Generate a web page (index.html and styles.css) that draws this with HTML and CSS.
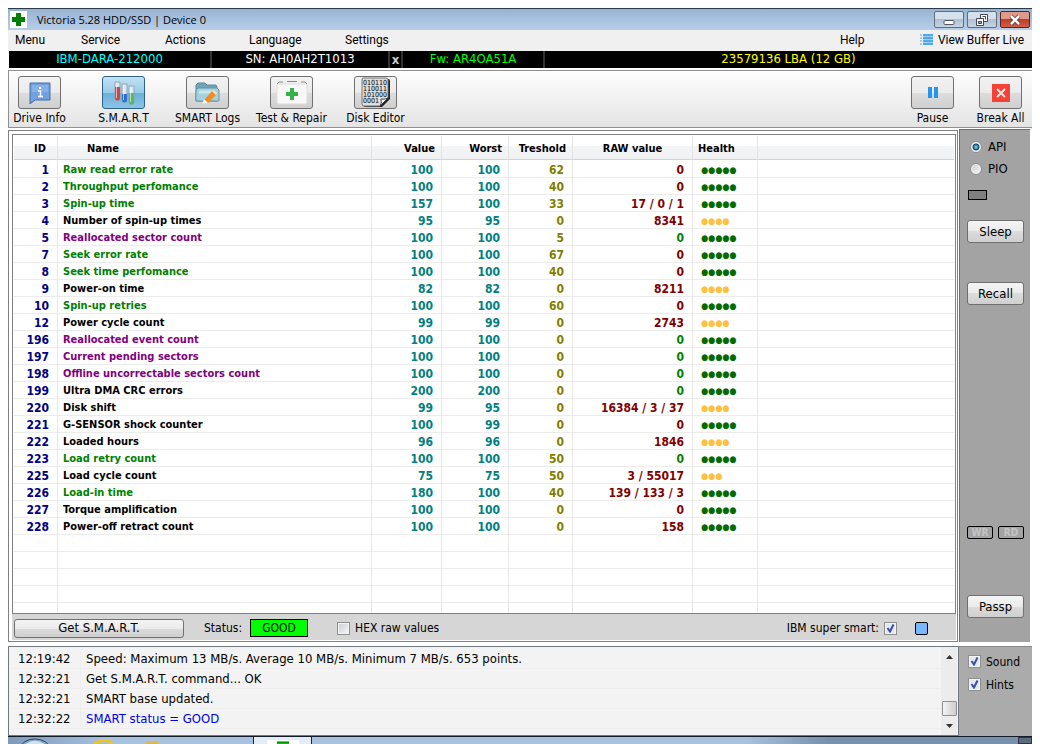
FILE: index.html
```html
<!DOCTYPE html>
<html lang="en">
<head>
  <meta charset="UTF-8">
  <meta name="viewport" content="width=device-width, initial-scale=1.0">
  <title>Victoria 5.28 HDD/SSD | Device 0</title>
  <link rel="stylesheet" href="styles.css">
</head>
<body>

  <header class="titlebar">
    <svg class="app-icon" width="17" height="17" viewBox="0 0 17 17"><rect width="17" height="17" fill="#fff"/><path d="M6 2h5v4h4v5h-4v4H6v-4H2V6h4z" fill="#008000"/></svg>
    <h1>Victoria 5.28 HDD/SSD | Device 0</h1>
    <div class="win-buttons">
      <button aria-label="Minimize"><svg width="12" height="12" viewBox="0 0 12 12"><rect x="1" y="6.500" width="10" height="4" rx="1" fill="#fff" stroke="#556"/></svg></button>
      <button aria-label="Restore"><svg width="12" height="12" viewBox="0 0 12 12"><path d="M4.500.500h7v7h-7z" fill="#fff" stroke="#445"/><path d="M6.500 2.500h3v3" fill="none" stroke="#445"/><path d="M.500 4.500h7v7h-7z" fill="#fff" stroke="#445"/><path d="M2.500 7.500h3v2h-3z" fill="#9ab" stroke="#445"/></svg></button>
      <button class="close" aria-label="Close"><svg width="12" height="12" viewBox="0 0 12 12"><path d="M2 2l8 8M10 2l-8 8" stroke="#533" stroke-width="4"/><path d="M2 2l8 8M10 2l-8 8" stroke="#fff" stroke-width="2.500"/></svg></button>
    </div>
  </header>

  <nav class="menu">
    <button>Menu</button>
    <button>Service</button>
    <button>Actions</button>
    <button>Language</button>
    <button>Settings</button>
    <button>Help</button>
    <button class="buffer">
      <svg width="14" height="12" viewBox="0 0 14 12"><path d="M3 1h10M3 4h10M3 7h10M3 10h10" stroke="#1e90e8" stroke-width="1.600"/><path d="M3 2.500h10M3 5.500h10M3 8.500h10" stroke="#9dd0f8"/><path d="M0 1h2M0 4h2M0 7h2M0 10h2" stroke="#58a8e8"/></svg>
      View Buffer Live
    </button>
  </nav>

  <div class="drive">
    <span class="model">IBM-DARA-212000</span>
    <span class="serial">SN: AH0AH2T1013</span>
    <button class="hide-sn">x</button>
    <span class="firmware">Fw: AR4OA51A</span>
    <span class="capacity">23579136 LBA (12 GB)</span>
  </div>

  <div class="toolbar">
    <div class="tool">
      <button id="t-info" aria-labelledby="l-info"><svg width="22" height="24" viewBox="0 0 22 24"><path d="M1 2h20v17H6l-5 4z" fill="#6fa0e0" stroke="#4a6f9f"/><path d="M3 4h16v7H3z" fill="#86b0e8"/><path d="M9 10h2.500v5M9 15.500h5" stroke="#fff" stroke-width="1.500" fill="none"/><rect x="10" y="6" width="2" height="2" fill="#fff"/></svg></button>
      <label id="l-info" for="t-info">Drive Info</label>
    </div>
    <div class="tool active">
      <button id="t-smart" aria-labelledby="l-smart"><svg width="22" height="28" viewBox="0 0 22 28"><g fill="#dbe8f2" stroke="#8fa6ba"><path d="M2 3v16a2.500 2.500 0 0 0 5 0V3z"/><path d="M9 5v16a2.500 2.500 0 0 0 5 0V5z"/><path d="M16 7v16a2.500 2.500 0 0 0 5 0V7z"/></g><path d="M2 8h5v11a2.500 2.500 0 0 1-5 0z" fill="#d8443c"/><path d="M9 15h5v6a2.500 2.500 0 0 1-5 0z" fill="#2b6fd0"/><path d="M16 14h5v9a2.500 2.500 0 0 1-5 0z" fill="#4cc05a"/><path d="M3.500 4v15M10.500 6v15M17.500 8v15" stroke="#fff" stroke-opacity=".6"/></svg></button>
      <label id="l-smart" for="t-smart">S.M.A.R.T</label>
    </div>
    <div class="tool">
      <button id="t-logs" aria-labelledby="l-logs"><svg width="25" height="24" viewBox="0 0 25 24"><path d="M1 20V4l2-2h7l2 2h9l1 2v14z" fill="#6fa3b8" stroke="#5b8ca1"/><path d="M3 7h19l2 2v11H1V9z" fill="#a5d0df" stroke="#6797ab"/><path d="M4 11h14" stroke="#c9e6ef" stroke-width="3"/><path d="M9 19l8-9 4 4-8 8z" fill="#f28c1c"/><path d="M9 18l4 4-6 1z" fill="#fff" stroke="#ccc" stroke-width=".5"/><path d="M17 10l2-1 3 3-1 2z" fill="#fbe0bd"/></svg></button>
      <label id="l-logs" for="t-logs">SMART Logs</label>
    </div>
    <div class="tool">
      <button id="t-test" aria-labelledby="l-test"><svg width="34" height="26" viewBox="0 0 34 26"><path d="M2 4l2-2h4M12 1.500h10M26 2h4l2 2" fill="none" stroke="#888"/><rect x="2" y="4" width="30" height="20" rx="2" fill="#f8f8f8" stroke="#ddd"/><path d="M15 8h4v4h4v4h-4v4h-4v-4h-4v-4h4z" fill="#35b34a"/></svg></button>
      <label id="l-test" for="t-test">Test &amp; Repair</label>
    </div>
    <div class="tool">
      <button id="t-disk" aria-labelledby="l-disk"><svg width="29" height="31" viewBox="0 0 29 31"><path d="M3 2h24q2 0 2 2v18l-8 8H5q-3 0-3-3z" fill="#222"/><path d="M2 1h23q2 0 2 2v18l-8 8H3q-2 0-2-2V3q0-2 1-2z" fill="#dedede" stroke="#777"/><g class="bits"><text x="2" y="8">010110</text><text x="2" y="14">110011</text><text x="2" y="20">101000</text><text x="2" y="26">0001</text></g><path d="M19 29q2-2 1-7 3 1 7-1z" fill="#fff" stroke="#444"/></svg></button>
      <label id="l-disk" for="t-disk">Disk Editor</label>
    </div>
    <div class="tool-end">
      <div class="tool">
        <button id="t-pause" aria-labelledby="l-pause"><svg width="10" height="11" viewBox="0 0 10 11"><path d="M0 0h4v11H0zM6 0h4v11H6z" fill="#2196f3"/></svg></button>
        <label id="l-pause" for="t-pause">Pause</label>
      </div>
      <div class="tool">
        <button id="t-break" aria-labelledby="l-break"><svg width="18" height="18" viewBox="0 0 18 18"><path d="M0 0h18v18H0z" fill="#f44336"/><path d="M5 5l8 8M13 5l-8 8" stroke="#fde8e6" stroke-width="2"/></svg></button>
        <label id="l-break" for="t-break">Break All</label>
      </div>
    </div>
  </div>

  <main class="main">
    <section class="panel">
      <div class="grid">
        <table>
          <colgroup><col class="c-id"><col class="c-name"><col class="c-value"><col class="c-worst"><col class="c-tresh"><col class="c-raw"><col class="c-health"><col></colgroup>
          <thead>
            <tr><th>ID</th><th>Name</th><th>Value</th><th>Worst</th><th>Treshold</th><th>RAW value</th><th>Health</th><th></th></tr>
          </thead>
          <tbody>
            <tr class="perf"><td>1</td><td>Raw read error rate</td><td>100</td><td>100</td><td>62</td><td>0</td><td>●●●●●</td><td></td></tr>
            <tr class="perf"><td>2</td><td>Throughput perfomance</td><td>100</td><td>100</td><td>40</td><td>0</td><td>●●●●●</td><td></td></tr>
            <tr class="perf"><td>3</td><td>Spin-up time</td><td>157</td><td>100</td><td>33</td><td>17 / 0 / 1</td><td>●●●●●</td><td></td></tr>
            <tr class="warn"><td>4</td><td>Number of spin-up times</td><td>95</td><td>95</td><td>0</td><td>8341</td><td>●●●●</td><td></td></tr>
            <tr class="crit ok"><td>5</td><td>Reallocated sector count</td><td>100</td><td>100</td><td>5</td><td>0</td><td>●●●●●</td><td></td></tr>
            <tr class="perf"><td>7</td><td>Seek error rate</td><td>100</td><td>100</td><td>67</td><td>0</td><td>●●●●●</td><td></td></tr>
            <tr class="perf"><td>8</td><td>Seek time perfomance</td><td>100</td><td>100</td><td>40</td><td>0</td><td>●●●●●</td><td></td></tr>
            <tr class="warn"><td>9</td><td>Power-on time</td><td>82</td><td>82</td><td>0</td><td>8211</td><td>●●●●</td><td></td></tr>
            <tr class="perf"><td>10</td><td>Spin-up retries</td><td>100</td><td>100</td><td>60</td><td>0</td><td>●●●●●</td><td></td></tr>
            <tr class="warn"><td>12</td><td>Power cycle count</td><td>99</td><td>99</td><td>0</td><td>2743</td><td>●●●●</td><td></td></tr>
            <tr class="crit ok"><td>196</td><td>Reallocated event count</td><td>100</td><td>100</td><td>0</td><td>0</td><td>●●●●●</td><td></td></tr>
            <tr class="crit ok"><td>197</td><td>Current pending sectors</td><td>100</td><td>100</td><td>0</td><td>0</td><td>●●●●●</td><td></td></tr>
            <tr class="crit ok"><td>198</td><td>Offline uncorrectable sectors count</td><td>100</td><td>100</td><td>0</td><td>0</td><td>●●●●●</td><td></td></tr>
            <tr class="ok"><td>199</td><td>Ultra DMA CRC errors</td><td>200</td><td>200</td><td>0</td><td>0</td><td>●●●●●</td><td></td></tr>
            <tr class="warn"><td>220</td><td>Disk shift</td><td>99</td><td>95</td><td>0</td><td>16384 / 3 / 37</td><td>●●●●</td><td></td></tr>
            <tr><td>221</td><td>G-SENSOR shock counter</td><td>100</td><td>99</td><td>0</td><td>0</td><td>●●●●●</td><td></td></tr>
            <tr class="warn"><td>222</td><td>Loaded hours</td><td>96</td><td>96</td><td>0</td><td>1846</td><td>●●●●</td><td></td></tr>
            <tr class="perf ok"><td>223</td><td>Load retry count</td><td>100</td><td>100</td><td>50</td><td>0</td><td>●●●●●</td><td></td></tr>
            <tr class="warn"><td>225</td><td>Load cycle count</td><td>75</td><td>75</td><td>50</td><td>3 / 55017</td><td>●●●</td><td></td></tr>
            <tr class="perf"><td>226</td><td>Load-in time</td><td>180</td><td>100</td><td>40</td><td>139 / 133 / 3</td><td>●●●●●</td><td></td></tr>
            <tr><td>227</td><td>Torque amplification</td><td>100</td><td>100</td><td>0</td><td>0</td><td>●●●●●</td><td></td></tr>
            <tr><td>228</td><td>Power-off retract count</td><td>100</td><td>100</td><td>0</td><td>158</td><td>●●●●●</td><td></td></tr>
            <tr><td></td><td></td><td></td><td></td><td></td><td></td><td></td><td></td></tr>
            <tr><td></td><td></td><td></td><td></td><td></td><td></td><td></td><td></td></tr>
            <tr><td></td><td></td><td></td><td></td><td></td><td></td><td></td><td></td></tr>
            <tr><td></td><td></td><td></td><td></td><td></td><td></td><td></td><td></td></tr>
            <tr><td></td><td></td><td></td><td></td><td></td><td></td><td></td><td></td></tr>
          </tbody>
        </table>
      </div>
      <div class="statusbar">
        <button class="btn get">Get S.M.A.R.T.</button>
        <span>Status:</span>
        <span class="good">GOOD</span>
        <label class="hex"><input type="checkbox"> HEX raw values</label>
        <label class="super">IBM super smart: <input type="checkbox" checked></label>
        <span class="led"></span>
      </div>
    </section>

    <aside class="side">
      <label><input type="radio" name="mode" checked> API</label>
      <label><input type="radio" name="mode"> PIO</label>
      <span class="lamp"></span>
      <button class="btn sleep">Sleep</button>
      <button class="btn recall">Recall</button>
      <div class="rw"><span>WR</span><span>RD</span></div>
      <button class="btn passp">Passp</button>
    </aside>
  </main>

  <footer class="bottom">
    <div class="log">
      <ul>
        <li><time>12:19:42</time><span>Speed: Maximum 13 MB/s. Average 10 MB/s. Minimum 7 MB/s. 653 points.</span></li>
        <li><time>12:32:21</time><span>Get S.M.A.R.T. command... OK</span></li>
        <li><time>12:32:21</time><span>SMART base updated.</span></li>
        <li><time>12:32:22</time><span class="blue">SMART status = GOOD</span></li>
      </ul>
      <div class="scroll">
        <svg width="7" height="4" viewBox="0 0 7 4"><path d="M0 4l3.500-4L7 4z" fill="#333"/></svg>
        <span class="thumb"></span>
        <svg width="7" height="4" viewBox="0 0 7 4"><path d="M0 0l3.500 4L7 0z" fill="#333"/></svg>
      </div>
    </div>
    <div class="options">
      <label><input type="checkbox" checked> Sound</label>
      <label><input type="checkbox" checked> Hints</label>
    </div>
  </footer>

  <div class="taskbar">
    <svg width="230" height="7" viewBox="0 0 230 7"><ellipse cx="27" cy="12" rx="15" ry="10" fill="#7fa3c4" stroke="#2e4a66"/><path d="M16 8q11-9 22 0z" fill="#cfe0ee"/><path d="M86 7q7-5 15-3l3 3" fill="none" stroke="#f0c428" stroke-width="3"/><path d="M137 5h14v2h-14z" fill="#d8b850"/></svg>
    <span class="task"><svg width="32" height="6" viewBox="0 0 32 6"><path d="M0 2h32v4H0z" fill="#fff"/><path d="M10 4h12v2H10z" fill="#00c400"/><path d="M10 4h12" stroke="#060"/></svg></span>
    <span class="desktop"></span>
  </div>

</body>
</html>
```
FILE: styles.css
```css
* {
  box-sizing: border-box;
}
body {
  margin: 0;
  padding: 8px 8px 0;
  height: 100vh;
  min-height: 640px;
  display: flex;
  flex-direction: column;
  overflow: hidden;
  background: #fff;
  color: #000;
  font-family: "DejaVu Sans Condensed", "Noto Sans", sans-serif;
  font-size: 12px;
  line-height: 16px;
}
button, input {
  font: inherit;
  color: inherit;
  margin: 0;
  padding: 0;
}
svg {
  display: block;
}

/* title bar */
.titlebar {
  display: flex;
  align-items: center;
  height: 22px;
  padding: 0 2px;
  border-top: 1px solid #2c3b4a;
  background: linear-gradient(#98b4d2, #b6cee8);
}
.titlebar h1 {
  margin: 0 0 0 10px;
  font: 11px/16px "Open Sans", sans-serif;
}
.win-buttons {
  display: flex;
  gap: 3px;
  margin-left: auto;
}
.win-buttons button {
  display: flex;
  align-items: center;
  justify-content: center;
  width: 30px;
  height: 17px;
  border: 1px solid #5d6d7e;
  border-radius: 2px;
  background: linear-gradient(#d4e0ec 50%, #b0c0d2 50%, #c4d4e4);
}
.win-buttons .close {
  background: linear-gradient(#e09a8c 50%, #c03c28 50%, #d06048);
  border-color: #5a2420;
}

/* menu */
.menu {
  display: grid;
  grid-template-columns: 66px 84px 84px 96px 1fr 80px auto;
  align-items: center;
  height: 21px;
  padding: 0 8px 2px 7px;
  background: #f0f0f0;
  font: 12px/16px Roboto, sans-serif;
}
.menu button {
  border: 0;
  background: none;
  text-align: left;
}
.menu .buffer {
  display: flex;
  align-items: center;
  gap: 4px;
}

/* drive info line */
.drive {
  display: flex;
  height: 17px;
  margin-left: 1px;
  background: #000;
  font-size: 13px;
  text-align: center;
}
.drive > * {
  border: 0;
  border-right: 2px solid #333;
  background: none;
}
.model {
  width: 203px;
  color: #00ffff;
}
.serial {
  width: 178px;
  color: #fff;
}
.drive .hide-sn {
  width: 13px;
  color: #ccc;
  font-weight: bold;
  line-height: 14px;
}
.firmware {
  width: 142px;
  color: #00ff00;
}
.drive .capacity {
  flex: 1;
  border-right: 0;
  color: #ffff00;
}

/* toolbar */
.toolbar {
  display: flex;
  gap: 23px;
  margin-top: 2px;
  padding: 5px 0 1px;
  border: solid #909090;
  border-width: 1px 0 1px 1px;
  background: linear-gradient(#fefefe, #e4e4e4);
}
.tool {
  display: flex;
  flex-direction: column;
  align-items: center;
  gap: 1px;
  width: 61px;
  white-space: nowrap;
}
.tool button {
  display: flex;
  align-items: center;
  justify-content: center;
  width: 43px;
  height: 33px;
  border: 1px solid #707070;
  border-radius: 3px;
  background: linear-gradient(#f2f2f2, #ebebeb 50%, #dddddd 50%, #cfcfcf);
}
.tool.active button {
  border-color: #2c628b;
  background: linear-gradient(#c4e2f4, #98cbe8 50%, #68afd8 50%, #8cc4e4);
}
.tool-end {
  display: flex;
  gap: 7px;
  margin-left: auto;
  padding-right: 1px;
}
.bits {
  font: 7px "DejaVu Sans Condensed", sans-serif;
  fill: #000;
}

/* main */
.main {
  display: flex;
  flex: 1;
  min-height: 0;
  margin-top: 1px;
}
.panel {
  display: flex;
  flex: 1;
  flex-direction: column;
  min-width: 0;
  margin-top: 1px;
  padding: 3px 1px 1px 3px;
  border: 1px solid #808080;
}
.grid {
  flex: 1;
  min-height: 0;
  overflow: hidden;
  padding: 1px;
  border: 1px solid #808080;
}
table {
  width: 100%;
  table-layout: fixed;
  border-collapse: separate;
  border-spacing: 0;
  font-weight: bold;
}
.c-id {
  width: 44px;
}
.c-name {
  width: 314px;
}
.c-value {
  width: 70px;
}
.c-worst {
  width: 67px;
}
.c-tresh {
  width: 64px;
}
.c-raw {
  width: 120px;
}
.c-health {
  width: 65px;
}
th, td {
  padding: 2px 8px 0 5px;
  border-right: 1px solid #e8e8e8;
  border-bottom: 1px solid #ececec;
  line-height: 14px;
  text-align: right;
  white-space: nowrap;
}
th:last-child, td:last-child {
  border-right: 0;
}
th {
  height: 24px;
  padding: 3px 6px 0;
  border-color: #d0d4d8;
  border-right-color: #e2e4e6;
  background: linear-gradient(#fff 45%, #f4f5f7 45%, #f0f1f3);
  font-size: 11px;
}
th:nth-child(1) {
  padding-right: 11px;
}
th:nth-child(2) {
  padding-left: 29px;
  text-align: left;
}
th:nth-child(6) {
  text-align: center;
}
th:nth-child(7) {
  padding-left: 5px;
  text-align: left;
}
td {
  height: 17px;
}
tr:first-child td {
  padding-top: 3px;
}
td:nth-child(1) {
  color: #000080;
}
td:nth-child(2) {
  font-size: 11px;
}
td:nth-child(2), td:nth-child(7) {
  text-align: left;
}
td:nth-child(3), td:nth-child(4) {
  color: #008080;
}
td:nth-child(5) {
  color: #808000;
}
td:nth-child(6) {
  color: #800000;
}
td:nth-child(7) {
  padding-left: 8px;
  color: #006c00;
  font-size: 9px;
}
.perf td:nth-child(2), .ok td:nth-child(6) {
  color: #008000;
}
.crit td:nth-child(2) {
  color: #800080;
}
.warn td:nth-child(7) {
  color: #ffc040;
}
.statusbar {
  display: flex;
  align-items: center;
  height: 26px;
  padding: 2px 28px 0 2px;
  background: #d6d6d6;
}
.btn {
  height: 23px;
  border: 1px solid #707070;
  border-radius: 3px;
  background: linear-gradient(#f4f4f4, #ebebeb 50%, #dcdcdc 50%, #cfcfcf);
  font-size: 13px;
}
.get {
  width: 170px;
  height: 19px;
  margin-right: 20px;
  line-height: 16px;
}
.good {
  width: 58px;
  margin-left: 8px;
  border: 1px solid #000;
  background: #00ff00;
  text-align: center;
}
label {
  display: flex;
  align-items: center;
}
.hex {
  margin-left: 29px;
  gap: 5px;
}
.super {
  margin-left: auto;
  gap: 5px;
}
.led {
  width: 13px;
  height: 13px;
  margin-left: 18px;
  border: 1px solid #000;
  border-radius: 2px;
  background: #78b8ff;
}

/* check boxes and radios */
input {
  appearance: none;
  width: 13px;
  height: 13px;
  border: 1px solid #8e8f8f;
  background: linear-gradient(135deg, #cbcfd5, #f6f6f6);
  box-shadow: inset 0 0 0 1px #f4f4f4;
}
input[type="checkbox"]:checked {
  background: url("data:image/svg+xml,%3Csvg xmlns='http://www.w3.org/2000/svg' viewBox='0 0 11 11'%3E%3Cpath d='M2.500 5l2.500 3.500L8.500 1.500' fill='none' stroke='%233c50a0' stroke-width='2'/%3E%3C/svg%3E") #e4e8f0;
}
input[type="radio"] {
  width: 12px;
  height: 12px;
  border-radius: 50%;
}
input[type="radio"]:checked {
  background: radial-gradient(circle, #58c0e8 1px, #143c64 3px, #f4f4f4 4px);
}

/* right side */
.side {
  display: flex;
  flex-direction: column;
  width: 71px;
  margin: 0 2px 0 1px;
  padding: 6px 6px 24px 7px;
  border: solid #707070;
  border-width: 1px 0 0 1px;
  background: #a3a3a3;
}
.side label {
  gap: 6px;
  height: 22px;
  padding-left: 3px;
  font-size: 13px;
}
.lamp {
  width: 19px;
  height: 10px;
  margin: 10px 0 20px 1px;
  border: 1px solid #000;
  background: #808080;
}
.recall {
  margin-top: 39px;
}
.rw {
  display: flex;
  gap: 5px;
  margin: auto 0 56px;
}
.rw span {
  width: 27px;
  height: 13px;
  border: 1px solid #000;
  border-radius: 2px;
  color: #c4c4c4;
  font-size: 10px;
  font-weight: bold;
  line-height: 11px;
  text-align: center;
}

/* log */
.bottom {
  display: flex;
  margin-top: 4px;
}
.log {
  display: flex;
  flex: 1;
  height: 90px;
  border: 1px solid #707880;
  background: #f3f3f3;
}
.log ul {
  flex: 1;
  margin: 0;
  padding: 2px 0 0 3px;
  list-style: none;
}
.log li {
  display: flex;
  height: 20px;
  border-bottom: 1px solid #eee;
  font-size: 13px;
  line-height: 20px;
}
.log time {
  width: 69px;
  padding-left: 6px;
  border-right: 1px solid #eee;
}
.log li span {
  padding-left: 5px;
}
.log .blue {
  color: #0000e0;
}
.scroll {
  display: flex;
  flex-direction: column;
  align-items: center;
  width: 16px;
  margin-right: 1px;
  padding: 8px 0 7px;
  background: #ececec;
}
.thumb {
  width: 15px;
  height: 15px;
  margin: auto 0 8px;
  border: 1px solid #909090;
  border-radius: 1px;
  background: linear-gradient(90deg, #f4f4f4, #ccc);
}
.options {
  width: 73px;
  padding: 3px 0 0 9px;
  border-top: 1px solid #888;
  background: #ababab;
}
.options label {
  gap: 5px;
  height: 23px;
}

/* taskbar */
.taskbar {
  display: flex;
  height: 8px;
  flex: none;
  border-top: 1px solid #101c28;
  background: linear-gradient(90deg, #7f9ab8, #a8c2de 10%, #a8c2de 72%, #7890ac 80%);
}
.task {
  width: 59px;
  margin-left: 15px;
  padding: 1px 0 0 13px;
  border: solid #223;
  border-width: 0 1px;
  background: #e4edf6;
}
.desktop {
  width: 14px;
  margin-left: auto;
  background: #5c6c80;
  border: 1px solid #334;
}
```
